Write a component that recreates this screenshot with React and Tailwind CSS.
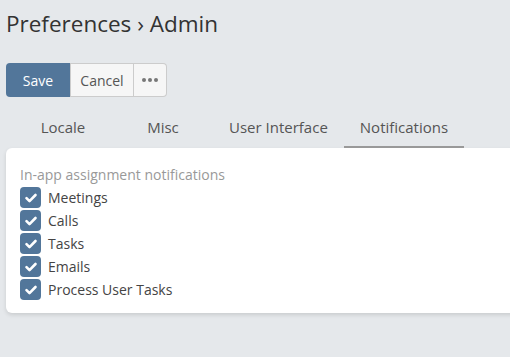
import React from 'react';

const items = ['Meetings', 'Calls', 'Tasks', 'Emails', 'Process User Tasks'];
const tabs = ['Locale', 'Misc', 'User Interface', 'Notifications'];

const Check = () => (
  <span className="flex h-[21px] w-[21px] items-center justify-center rounded-[4px] bg-[#52769a]">
    <svg width="14" height="14" viewBox="0 0 14 14" fill="none">
      <path d="M2.5 7.2l3 3 6-6.2" stroke="#fff" strokeWidth="2.6" strokeLinecap="round" strokeLinejoin="round" />
    </svg>
  </span>
);

export default function App() {
  return (
    <div className="min-h-[357px] w-[510px] overflow-hidden bg-[#e5e8eb] pl-[6px] pt-[10px] font-['Open_Sans',sans-serif]">
      <h1 className="text-[22.5px] leading-[28px] text-[#333]">Preferences › Admin</h1>

      <div className="mt-[25px] flex h-[34px] w-fit text-[14px]">
        <button className="w-[64px] rounded-l-[4px] bg-[#52769a] text-white">Save</button>
        <button className="w-[64px] border border-[#ccc] bg-[#f6f6f6] text-[#555]">Cancel</button>
        <button className="flex w-[33px] items-center justify-center gap-[1.5px] rounded-r-[4px] border border-l-0 border-[#ccc] bg-[#f6f6f6]">
          <span className="h-[4.5px] w-[4.5px] rounded-full bg-[#777]" />
          <span className="h-[4.5px] w-[4.5px] rounded-full bg-[#777]" />
          <span className="h-[4.5px] w-[4.5px] rounded-full bg-[#777]" />
        </button>
      </div>

      <div className="mt-[14px] flex pl-[7px] text-[15px] text-[#555]">
        {tabs.map((t) => (
          <div
            key={t}
            className={`flex h-[37px] min-w-[100px] items-center justify-center border-b-2 px-4 pb-[2px] ${
              t === 'Notifications' ? 'border-[#999]' : 'border-transparent'
            }`}
          >
            {t}
          </div>
        ))}
      </div>

      <div className="w-[520px] rounded-[6px] bg-white pb-[13px] pl-[14px] pt-[17px] shadow-[0_2px_4px_rgba(0,0,0,0.12)]">
        <div className="text-[14px] leading-[20px] text-[#999]">In-app assignment notifications</div>
        <div className="mt-[2px] flex flex-col gap-[2px]">
          {items.map((i) => (
            <label key={i} className="flex h-[21px] items-center gap-[7px] text-[14px] text-[#444]">
              <Check />
              <span>{i}</span>
            </label>
          ))}
        </div>
      </div>
    </div>
  );
}
